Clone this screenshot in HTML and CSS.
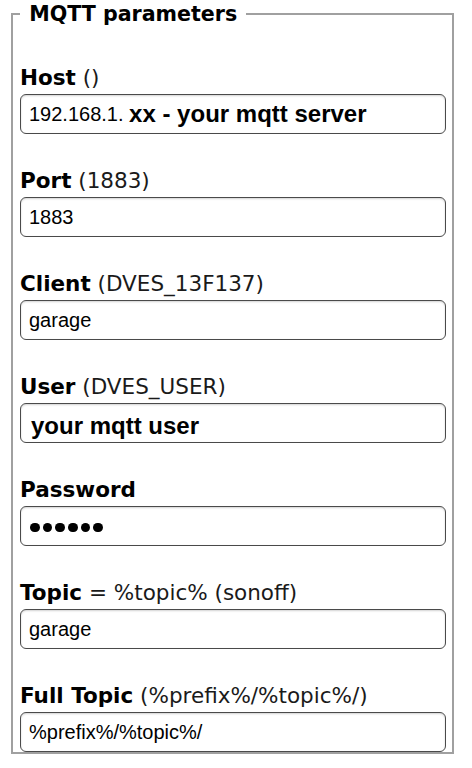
FILE: index.html
```html
<!DOCTYPE html>
<html lang="en">
<head>
<meta charset="utf-8">
<title>MQTT parameters</title>
<link rel="stylesheet" href="styles.css">
</head>
<body>
<fieldset class="box">
  <legend class="box-title">&nbsp;MQTT parameters&nbsp;</legend>
  <form class="form">
    <div class="row">
      <label class="label"><b>Host</b> ()</label>
      <div class="field"><span>192.168.1.</span>&nbsp;<b class="note">xx - your mqtt server</b></div>
    </div>
    <div class="row">
      <label class="label"><b>Port</b> (1883)</label>
      <div class="field">1883</div>
    </div>
    <div class="row">
      <label class="label"><b>Client</b> (DVES_13F137)</label>
      <div class="field">garage</div>
    </div>
    <div class="row">
      <label class="label"><b>User</b> (DVES_USER)</label>
      <div class="field"><b class="note note-user">your mqtt user</b></div>
    </div>
    <div class="row">
      <label class="label"><b>Password</b></label>
      <div class="field"><span class="dots"><i></i><i></i><i></i><i></i><i></i><i></i></span></div>
    </div>
    <div class="row">
      <label class="label"><b>Topic</b> = %topic% (sonoff)</label>
      <div class="field">garage</div>
    </div>
    <div class="row">
      <label class="label"><b>Full Topic</b> (%prefix%/%topic%/)</label>
      <div class="field">%prefix%/%topic%/</div>
    </div>
  </form>
</fieldset>
</body>
</html>
```

FILE: styles.css
```css
html, body {
  background: #ffffff;
}
body {
  margin: 0;
  padding: 2px 18px 0 11px;
  font-family: "DejaVu Sans", Verdana, sans-serif;
  font-size: 21.5px;
  color: #111;
}
.box {
  margin: 0;
  border: 2px solid #a0a0a0;
  padding: 0 6px 0 7px;
  min-width: 0;
}
.box-title {
  padding: 0 2px;
  font-weight: bold;
  font-size: 20.6px;
  line-height: 24px;
  color: #000;
}
.form {
  display: flex;
  flex-direction: column;
  gap: 35px;
  padding-top: 40px;
}
.row {
  display: flex;
  flex-direction: column;
  gap: 4px;
}
.label {
  line-height: 24px;
  height: 24px;
  white-space: nowrap;
  color: #1a1a1a;
}
.label b {
  color: #000;
}
.field {
  box-sizing: border-box;
  height: 40px;
  border: 1px solid #4a4a4a;
  border-radius: 6px;
  box-shadow: inset 0 1px 2px rgba(0, 0, 0, 0.18);
  padding: 0 8px;
  display: flex;
  align-items: center;
  font-family: "Liberation Sans", Arial, sans-serif;
  font-size: 20px;
  color: #000;
  white-space: nowrap;
}
.note {
  font-size: 24px;
  font-weight: bold;
}
.note-user {
  padding-left: 2px;
  padding-top: 6px;
}
.dots {
  display: flex;
  gap: 3.1px;
  padding-left: 1px;
  padding-top: 3px;
}
.dots i {
  display: block;
  width: 9.6px;
  height: 9.6px;
  border-radius: 50%;
  background: #000;
}
```
